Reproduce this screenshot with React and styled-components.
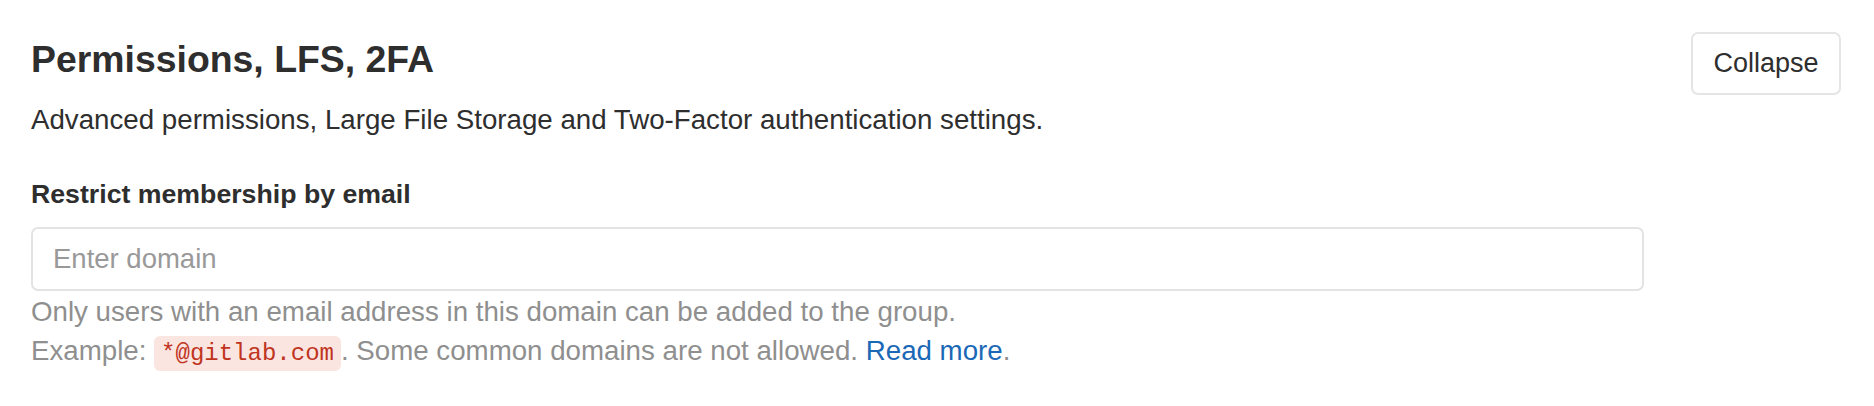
import React from "react";
import styled, { createGlobalStyle } from "styled-components";

const GlobalStyle = createGlobalStyle`
  html, body {
    margin: 0;
    padding: 0;
    background: #ffffff;
  }
  body {
    font-family: "Liberation Sans", Arial, Helvetica, sans-serif;
    color: #2e2e2e;
    -webkit-font-smoothing: antialiased;
  }
  * { box-sizing: border-box; }
`;

const Section = styled.section`
  padding: 32px 33px 0 31px;
  width: 1874px;
  height: 406px;
`;

const Header = styled.div`
  display: flex;
  justify-content: space-between;
  align-items: flex-start;
`;

const HeaderText = styled.div`
  display: flex;
  flex-direction: column;
`;

const Title = styled.h4`
  margin: 5px 0 20px;
  font-size: 37.4px;
  line-height: 44px;
  font-weight: 700;
  color: #2e2e2e;
`;

const Description = styled.p`
  margin: 0;
  font-size: 27.7px;
  line-height: 38px;
  color: #2e2e2e;
`;

const CollapseButton = styled.button`
  width: 150px;
  height: 63px;
  padding: 0;
  border: 2px solid #e5e5e5;
  border-radius: 7px;
  background: #ffffff;
  color: #2e2e2e;
  font-family: "Liberation Sans", Arial, Helvetica, sans-serif;
  font-size: 27px;
  cursor: pointer;
  flex-shrink: 0;
`;

const FormGroup = styled.div`
  margin-top: 36px;
  display: flex;
  flex-direction: column;
`;

const Label = styled.label`
  font-size: 26.7px;
  line-height: 38px;
  font-weight: 700;
  color: #2e2e2e;
  margin-bottom: 14px;
`;

const Input = styled.input`
  width: 1613px;
  height: 64px;
  padding: 0 20px;
  border: 2px solid #e3e3e3;
  border-radius: 7px;
  font-family: "Liberation Sans", Arial, Helvetica, sans-serif;
  font-size: 27.5px;
  color: #2e2e2e;
  outline: none;
  &::placeholder {
    color: #999999;
  }
`;

const Help = styled.div`
  margin-top: 1px;
  font-size: 27.7px;
  line-height: 39px;
  color: #8f8f8f;
`;

const HelpLine = styled.div``;

const Code = styled.code`
  font-family: "Liberation Mono", "DejaVu Sans Mono", monospace;
  font-size: 24px;
  padding: 4px 7px;
  border-radius: 6px;
  background: #fbe5e1;
  color: #c0341d;
`;

const Link = styled.a`
  color: #1b69b6;
  text-decoration: none;
`;

export default function App() {
  return (
    <>
      <GlobalStyle />
      <Section>
        <Header>
          <HeaderText>
            <Title>Permissions, LFS, 2FA</Title>
            <Description>
              Advanced permissions, Large File Storage and Two-Factor authentication settings.
            </Description>
          </HeaderText>
          <CollapseButton type="button">Collapse</CollapseButton>
        </Header>
        <FormGroup>
          <Label htmlFor="domain">Restrict membership by email</Label>
          <Input id="domain" type="text" placeholder="Enter domain" />
          <Help>
            <HelpLine>Only users with an email address in this domain can be added to the group.</HelpLine>
            <HelpLine>
              Example: <Code>*@gitlab.com</Code>. Some common domains are not allowed.{" "}
              <Link href="#">Read more</Link>.
            </HelpLine>
          </Help>
        </FormGroup>
      </Section>
    </>
  );
}
